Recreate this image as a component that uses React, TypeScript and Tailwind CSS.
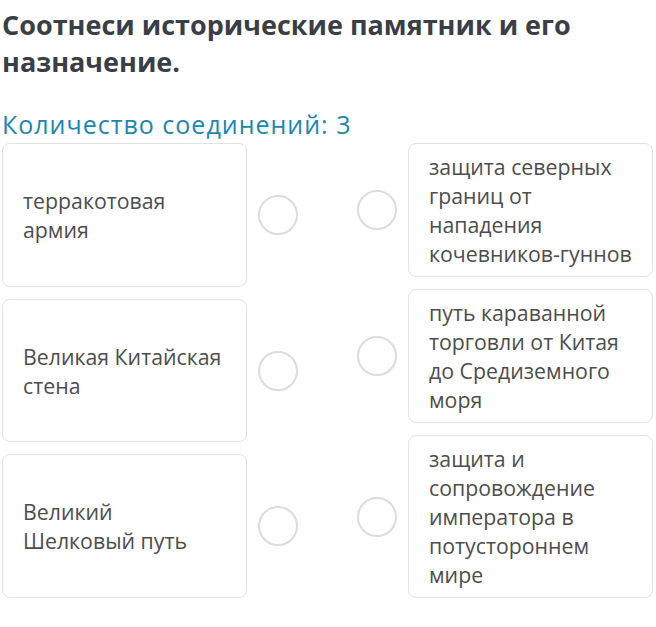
const left = ["терракотовая армия", "Великая Китайская стена", "Великий Шелковый путь"];

const right = [
  "защита северных границ от нападения кочевников-гуннов",
  "путь караванной торговли от Китая до Средиземного моря",
  "защита и сопровождение императора в потустороннем мире",
];

function Dot() {
  return <span className="block h-[40px] w-[40px] shrink-0 rounded-full border-2 border-[#dcdcdc] bg-white" />;
}

export default function App() {
  return (
    <main
      className="min-h-[627px] bg-white pl-[2px] pr-[3px] pt-[6px]"
      style={{ fontFamily: '"Open Sans", "Noto Sans", sans-serif' }}
    >
      <h1 className="pr-[40px] text-[27px] font-bold leading-[37px] text-[#3a3f47]">
        Соотнеси исторические памятник и его назначение.
      </h1>
      <p className="mt-[28px] text-[25px] leading-[32px] tracking-[1px] text-[#1c86b1]">Количество соединений: 3</p>

      <div className="mt-[3px] flex justify-between">
        <div className="flex w-[296px] flex-col gap-[12px]">
          {left.map((t) => (
            <div key={t} className="flex flex-1 items-center gap-[11px]">
              <div className="flex h-full w-[245px] items-center rounded-[8px] border border-[#e2e2e2] px-[20px] text-[21.3px] leading-[29px] text-[#4d4d4d]">
                {t}
              </div>
              <Dot />
            </div>
          ))}
        </div>

        <div className="flex w-[296px] flex-col gap-[12px]">
          {right.map((t) => (
            <div key={t} className="flex items-center gap-[11px]">
              <Dot />
              <div className="w-[246px] rounded-[8px] border border-[#e2e2e2] py-[8px] pl-[20px] pr-[6px] text-[21.3px] leading-[29px] text-[#4d4d4d]">
                {t}
              </div>
            </div>
          ))}
        </div>
      </div>
    </main>
  );
}
